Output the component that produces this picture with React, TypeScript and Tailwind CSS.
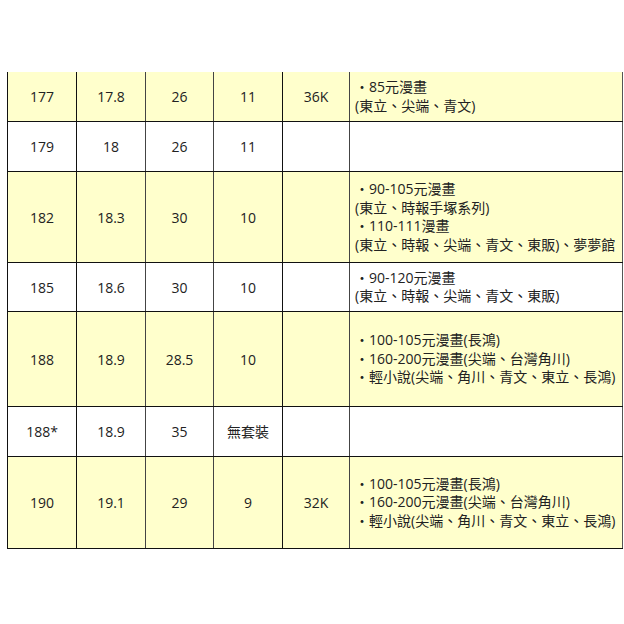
import React from "react";

type Row = {
  cells: string[];
  notes: string[];
  h: string;
  yellow: boolean;
};

const rows: Row[] = [
  { cells: ["177", "17.8", "26", "11", "36K"], notes: ["・85元漫畫", "(東立、尖端、青文)"], h: "h-[50px]", yellow: true },
  { cells: ["179", "18", "26", "11", ""], notes: [], h: "h-[50px]", yellow: false },
  {
    cells: ["182", "18.3", "30", "10", ""],
    notes: ["・90-105元漫畫", "(東立、時報手塚系列)", "・110-111漫畫", "(東立、時報、尖端、青文、東販)、夢夢館"],
    h: "h-[91px]",
    yellow: true,
  },
  { cells: ["185", "18.6", "30", "10", ""], notes: ["・90-120元漫畫", "(東立、時報、尖端、青文、東販)"], h: "h-[49px]", yellow: false },
  {
    cells: ["188", "18.9", "28.5", "10", ""],
    notes: ["・100-105元漫畫(長鴻)", "・160-200元漫畫(尖端、台灣角川)", "・輕小說(尖端、角川、青文、東立、長鴻)"],
    h: "h-[95px]",
    yellow: true,
  },
  { cells: ["188*", "18.9", "35", "無套裝", ""], notes: [], h: "h-[50px]", yellow: false },
  {
    cells: ["190", "19.1", "29", "9", "32K"],
    notes: ["・100-105元漫畫(長鴻)", "・160-200元漫畫(尖端、台灣角川)", "・輕小說(尖端、角川、青文、東立、長鴻)"],
    h: "h-[92px]",
    yellow: true,
  },
];

const colW = ["w-[69px]", "w-[69px]", "w-[68px]", "w-[69px]", "w-[67px]"];
const colBorder = ["border-[#111]", "border-[#444]", "border-[#444]", "border-[#111]", "border-[#444]"];

export default function App() {
  return (
    <div
      className="w-[624px] h-[624px] bg-white pt-[72px] pl-[7px] text-[14px] text-[#222]"
      style={{ fontFamily: '"Open Sans", "Noto Sans CJK TC", sans-serif' }}
    >
      <div className="flex flex-col w-[616px] border-l border-[#111]">
        {rows.map((r, i) => (
          <div
            key={i}
            className={`flex border-b border-[#111] ${r.h} ${r.yellow ? "bg-[#ffffcc]" : "bg-white"}`}
          >
            {r.cells.map((c, j) => (
              <div
                key={j}
                className={`flex items-center justify-center border-r ${colW[j]} ${colBorder[j]}`}
              >
                {c}
              </div>
            ))}
            <div className="flex flex-col justify-center w-[273px] border-r border-[#555] pl-[5px] leading-[18.5px] whitespace-nowrap">
              {r.notes.map((n, k) => (
                <div key={k}>{n}</div>
              ))}
            </div>
          </div>
        ))}
      </div>
    </div>
  );
}
